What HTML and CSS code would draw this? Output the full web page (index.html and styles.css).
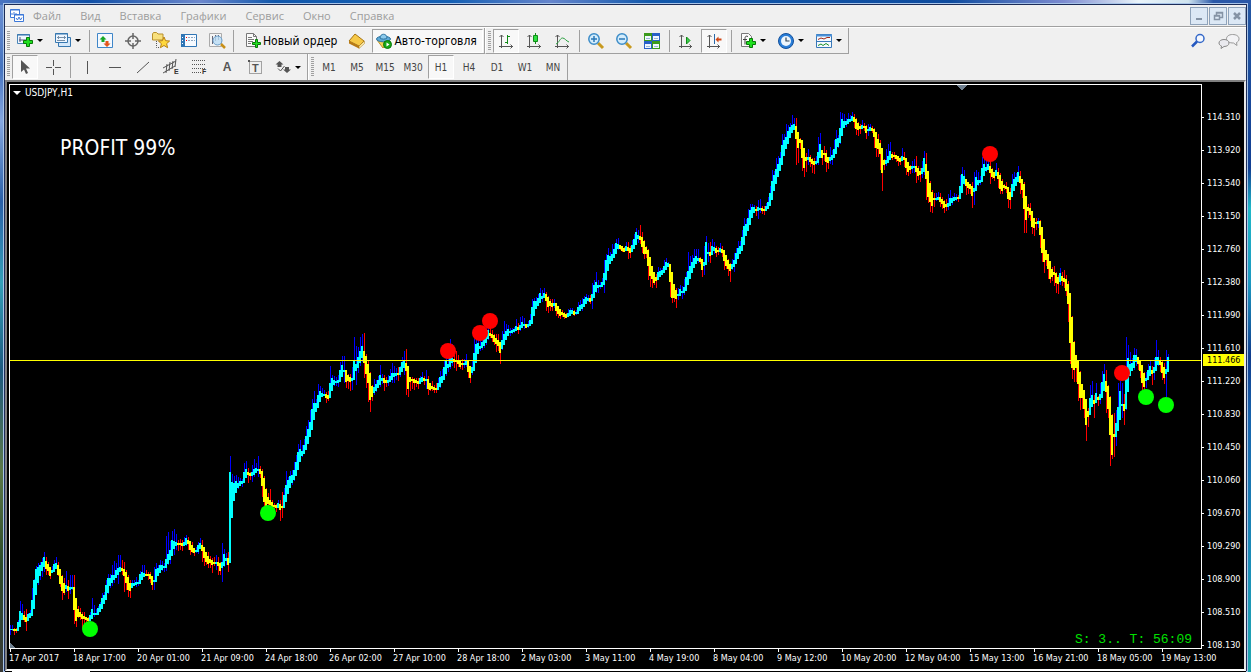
FILE: index.html
```html
<!DOCTYPE html>
<html lang="ru">
<head>
    <meta charset="UTF-8">
    <meta name="viewport" content="width=device-width, initial-scale=1.0">
    <title>USDJPY,H1</title>
    <link rel="stylesheet" href="styles.css">
</head>
<body>
<div class="window">
    <header class="menubar">
        <svg class="logo" viewBox="0 0 16 16"><path d="M1.500 1.500h9v8h-9z" fill="#fff" stroke="#3c78d8"/><path d="M1 2h10M3 5v2M5 4v3M7 5v3" stroke="#3c78d8"/><path d="M5.500 6.500h9v7h-9z" fill="#fff" stroke="#3c78d8"/><path d="M5 7h10" stroke="#3c78d8"/><path d="M7 10l1.500 2L10 9l1.500 3L13 9.500" fill="none" stroke="#3c78d8"/></svg>
        <nav class="menu">
            <a href="#">Файл</a>
            <a href="#">Вид</a>
            <a href="#">Вставка</a>
            <a href="#">Графики</a>
            <a href="#">Сервис</a>
            <a href="#">Окно</a>
            <a href="#">Справка</a>
        </nav>
        <div class="win-btns">
            <button type="button" aria-label="Свернуть"><svg viewBox="0 0 16 16"><path d="M5 11h6" stroke="#8593a5" stroke-width="2"/></svg></button>
            <button type="button" aria-label="Восстановить"><svg viewBox="0 0 16 16"><path d="M6.500 7V4.500h6v5H10M6 5h7M4.500 7.500h5v4h-5zM4 8h6" fill="none" stroke="#8593a5" stroke-width="1.500"/></svg></button>
            <button type="button" aria-label="Закрыть"><svg viewBox="0 0 16 16"><path d="M5 5l6 6M11 5l-6 6" stroke="#8593a5" stroke-width="2.500"/></svg></button>
        </div>
    </header>

    <div class="row main-row">
        <div class="toolbar standard">
            <span class="grip"></span>
            <button type="button" class="drop" aria-label="Новый график"><svg viewBox="0 0 16 16"><path d="M.5 1.500h12v9H.5z" fill="#eef6ff" stroke="#4a86b8"/><path d="M0 2h13" stroke="#2f6ea8"/><path d="M3 4v5M2 7h7" stroke="#557"/><path d="M9.500 4.500h3v3h3v3h-3v3h-3v-3h-3v-3h3z" fill="#1fe01f" stroke="#087808"/></svg></button>
            <button type="button" class="drop" aria-label="Профили"><svg viewBox="0 0 16 16"><path d="M3.500 4.500h12v9h-12z" fill="#d4e8fb" stroke="#3878b0"/><path d="M.5.500h12v9H.5z" fill="#eef6ff" stroke="#3878b0"/><path d="M0 1h13" stroke="#3878b0"/><path d="M2 4.500h9M2 7.500h8M3.500 3v3M9.500 3v3" stroke="#7890a8"/></svg></button>
            <span class="sep"></span>
            <button type="button" aria-label="Обзор рынка"><svg viewBox="0 0 16 16"><path d="M.5.500h15v14H.5z" fill="#f4f9ff" stroke="#3f86c8"/><path d="M6 3l3.500 3.500H7.500V9h-3V6.500H2.500z" fill="#16a826"/><path d="M10 14L6.500 10.500h2V8h3v2.500h2z" fill="#e4571c"/></svg></button>
            <button type="button" aria-label="Навигатор"><svg viewBox="0 0 16 16"><circle cx="8" cy="8" r="5" fill="none" stroke="#666" stroke-width="1.500"/><path d="M8 0v6M8 10v6M0 8h6M10 8h6" stroke="#666" stroke-width="1.500"/></svg></button>
            <button type="button" aria-label="Избранное"><svg viewBox="0 0 16 16"><path d="M-.5 7V1l1-1.500h3L5 1h5v6z" fill="#f8e07c" stroke="#b8902c"/><path d="M3.500 8v6.500h3" fill="none" stroke="#555" stroke-dasharray="1 1"/><path d="M11 4l1.600 3.700 4 .3-3 2.700 1 4L11 12.500l-3.600 2.200 1-4-3-2.700 4-.3z" fill="#ffd83c" stroke="#b88010"/></svg></button>
            <button type="button" aria-label="Терминал"><svg viewBox="0 0 16 16"><path d="M.5 1.500h15v12H.5z" fill="#f6faff" stroke="#2f75b5"/><path d="M0 1h4v13H0z" fill="#2f75b5"/><path d="M1 4.500h1M1 7.500h1M1 10.500h1" stroke="#fff"/><path d="M7 4.500h7M7 7.500h7" stroke="#8ca6c0" stroke-dasharray="2 1"/><path d="M5 4.500h1M5 7.500h1" stroke="#f00"/></svg></button>
            <button type="button" aria-label="Тестер"><svg viewBox="0 0 16 16"><path d="M.5.500h12v13H.5z" fill="#f4f4f4" stroke="#aaa"/><path d="M3.500 3v8M6.500 2v6M9.500 2v5" stroke="#667"/><circle cx="8.500" cy="7.500" r="4.500" fill="#b9dcf5" fill-opacity=".8" stroke="#6b9dc8"/><path d="M12 11l4 4" stroke="#c89018" stroke-width="2.500"/></svg></button>
            <span class="sep"></span>
            <button type="button" class="wide"><svg viewBox="0 0 16 16"><path d="M1.500.500h7l3 3v10h-10z" fill="#fafafa" stroke="#777"/><path d="M8.500.500v3h3M3 4.500h4M3 6.500h6M3 8.500h5M3 10.500h3" fill="none" stroke="#777"/><path d="M10.500 6.500h2v3h3v2h-3v3h-2v-3h-3v-2h3z" fill="#1fe01f" stroke="#087808"/></svg>Новый ордер</button>
            <button type="button" aria-label="Редактор"><svg viewBox="0 0 16 16"><path d="M6 1l9 7-5 5L0 8z" fill="#f6c948" stroke="#a87410"/><path d="M0 8v2.500l10 5V13z" fill="#b87a14"/><path d="M10 13v2.500l5.500-5V8z" fill="#fff0b0" stroke="#a87410" stroke-width=".5"/></svg></button>
            <button type="button" class="wide pressed auto"><svg viewBox="0 0 16 16"><path d="M1 7l6 8 7-8z" fill="#f2cf55" stroke="#b8922c"/><ellipse cx="7.500" cy="6" rx="7" ry="2.800" fill="#5eaad8" stroke="#2d739f"/><path d="M4 5c0-5 7-5 7 0-2 1.500-5 1.500-7 0z" fill="#8ccaec" stroke="#2d739f"/><circle cx="11.500" cy="11.500" r="4" fill="#18a818" stroke="#087808"/><path d="M10.500 9.500v4l3-2z" fill="#fff"/></svg>Авто-торговля</button>
        </div>
        <div class="toolbar">
            <span class="grip"></span>
            <button type="button" class="pressed" aria-label="Бары"><svg viewBox="0 0 16 16"><path d="M3.500 15V2M1.500 4l2-2 2 2M1 13.500h14M12.500 11.500l2 2-2 2" fill="none" stroke="#555"/><path d="M9.500 2v9M9 3.500h3M7 9.500h3" stroke="#128a18"/></svg></button>
            <button type="button" aria-label="Японские свечи"><svg viewBox="0 0 16 16"><path d="M3.500 15V2M1.500 4l2-2 2 2M1 13.500h14M12.500 11.500l2 2-2 2" fill="none" stroke="#555"/><path d="M9.500 0v11" stroke="#128a18"/><path d="M7.500 2.500h4v6h-4z" fill="#2ee040" stroke="#128a18"/></svg></button>
            <button type="button" aria-label="Линия"><svg viewBox="0 0 16 16"><path d="M3.500 15V2M1.500 4l2-2 2 2M1 13.500h14M12.500 11.500l2 2-2 2" fill="none" stroke="#555"/><path d="M2 11c3-1 4-6 6.500-6S12 8 15 9" fill="none" stroke="#2aa040"/></svg></button>
            <span class="sep"></span>
            <button type="button" aria-label="Увеличить"><svg viewBox="0 0 16 16"><path d="M10 10l5 5" stroke="#c89a20" stroke-width="3"/><circle cx="6" cy="6" r="5.200" fill="#d4ecfb" stroke="#3c8cc8" stroke-width="1.500"/><path d="M6 3v6M3 6h6" stroke="#2a78b8" stroke-width="1.500"/></svg></button>
            <button type="button" aria-label="Уменьшить"><svg viewBox="0 0 16 16"><path d="M10 10l5 5" stroke="#c89a20" stroke-width="3"/><circle cx="6" cy="6" r="5.200" fill="#d4ecfb" stroke="#3c8cc8" stroke-width="1.500"/><path d="M3 6h6" stroke="#2a78b8" stroke-width="1.500"/></svg></button>
            <button type="button" aria-label="Окна"><svg viewBox="0 0 16 16"><path d="M0 0h8v8H0zM8 8h8v8H8z" fill="#3c9a1c"/><path d="M8 0h8v8H8zM0 8h8v8H0z" fill="#2860c8"/><path d="M1 3h6v4H1zM9 3h6v4H9zM1 11h6v4H1zM9 11h6v4H9z" fill="#f0f6ff"/><path d="M2 5.500h4M10 5.500h4M2 13.500h4M10 13.500h4" stroke="#9bb8d8"/></svg></button>
            <span class="sep"></span>
            <button type="button" aria-label="Автопрокрутка"><svg viewBox="0 0 16 16"><path d="M3.500 15V2M1.500 4l2-2 2 2M1 13.500h13M11.500 11.500l2 2-2 2" fill="none" stroke="#555"/><path d="M8.500 4v7l3.500-3.500z" fill="#3ad04a" stroke="#128a18"/></svg></button>
            <button type="button" class="pressed" aria-label="Сдвиг графика"><svg viewBox="0 0 16 16"><path d="M3.500 15V2M1.500 4l2-2 2 2M1 13.500h13M11.500 11.500l2 2-2 2" fill="none" stroke="#555"/><path d="M8.500 1v10" stroke="#2868a8"/><path d="M9.500 6.500l3-3v2h3v2h-3v2z" fill="#d04818"/></svg></button>
            <span class="sep"></span>
            <button type="button" class="drop" aria-label="Индикаторы"><svg viewBox="0 0 16 16"><path d="M1.500.500h7l3 3v10h-10z" fill="#fafafa" stroke="#777"/><path d="M8 3.500c-2-1-3 0-3 2v6M3 6.500h4" fill="none" stroke="#444"/><path d="M9.500 5.500h3v3h3v3h-3v3h-3v-3h-3v-3h3z" fill="#1fe01f" stroke="#087808"/></svg></button>
            <button type="button" class="drop" aria-label="Периоды"><svg viewBox="0 0 16 16"><circle cx="8" cy="8" r="7.500" fill="#2a7ed8" stroke="#12509c"/><circle cx="8" cy="8" r="5" fill="#eef6fd"/><path d="M8 4.500V8h3.500" fill="none" stroke="#345" stroke-width="1.200"/></svg></button>
            <button type="button" class="drop" aria-label="Шаблоны"><svg viewBox="0 0 16 16"><path d="M.5 1.500h15v13H.5z" fill="#f4f9ff" stroke="#3878b8"/><path d="M0 2.500h16" stroke="#4a90d8" stroke-width="2"/><path d="M1 8.500h14" stroke="#3878b8"/><path d="M2 6.500l3-1.500 3 1 3-1.500h3" fill="none" stroke="#a02818"/><path d="M2 12.500l3-1.500 2 1.500 3-2 3 2" fill="none" stroke="#1a9028"/></svg></button>
        </div>
        <div class="tools-right">
            <button type="button" aria-label="Поиск"><svg viewBox="0 0 16 16"><circle cx="10" cy="5.500" r="4" fill="#f4f8ff" stroke="#3468c8" stroke-width="1.500"/><path d="M7 8.500l-5 5" stroke="#2458c0" stroke-width="2.500"/></svg></button>
            <button type="button" class="chat" aria-label="Чат"><svg viewBox="0 0 22 16"><path d="M14.500 1.500c4 0 6.500 1.800 6.500 4.300 0 2-1 3-2.500 3.700l.5 3-3.500-2.500c-4 0-7-1.300-7-4.200 0-2.500 2.500-4.300 6-4.300z" fill="#f3f3f5" stroke="#999"/><path d="M6 6.500c3 0 5 1.400 5 3.500s-2 3.500-5 3.500l-3 2 .5-2.500C2 12.400 1 11.500 1 10c0-2 2-3.500 5-3.500z" fill="#e9e9ee" stroke="#888"/></svg></button>
        </div>
    </div>

    <div class="row">
        <div class="toolbar">
            <span class="grip"></span>
            <button type="button" class="pressed" aria-label="Курсор"><svg viewBox="0 0 16 16"><path d="M4 1v12l3-2.500L9 15l2-1-2-4.500h4z" fill="#555"/></svg></button>
            <button type="button" aria-label="Перекрестие"><svg viewBox="0 0 16 16"><path d="M8.500 1v6M8.500 10v6M1 8.500h6M10 8.500h6" stroke="#555"/></svg></button>
            <span class="sep"></span>
            <button type="button" aria-label="Вертикальная линия"><svg viewBox="0 0 16 16"><path d="M8.500 2v13" stroke="#555"/></svg></button>
            <button type="button" aria-label="Горизонтальная линия"><svg viewBox="0 0 16 16"><path d="M2 8.500h12" stroke="#555"/></svg></button>
            <button type="button" aria-label="Трендовая линия"><svg viewBox="0 0 16 16"><path d="M2 14L14 3" stroke="#555"/></svg></button>
            <button type="button" aria-label="Канал"><svg viewBox="0 0 16 16"><path d="M0 9L13 2M0 14L12 7" stroke="#555"/><path d="M4 5l-1 9M7 3L6 12M10 2L9 10M13 0l-1 8" stroke="#555"/><text x="11" y="15" class="mark">E</text></svg></button>
            <button type="button" aria-label="Фибоначчи"><svg viewBox="0 0 16 16"><path d="M1 1.500h14M1 5.500h14M1 9.500h14M1 13.500h9" stroke="#555" stroke-dasharray="1 1"/><text x="11" y="15" class="mark">F</text></svg></button>
            <button type="button" class="letter">A</button>
            <button type="button" aria-label="Метка"><svg viewBox="0 0 16 16"><path d="M2.500 2.500h12v12h-12z" fill="none" stroke="#555" stroke-dasharray="1 1"/><path d="M1 1h2v2H1z" fill="#555"/><text x="5" y="13" class="tee">T</text></svg></button>
            <button type="button" class="drop" aria-label="Стрелки"><svg viewBox="0 0 16 16"><path d="M4.500 2l4 3.500h-2V8h-4V5.500h-2zM12 14l-4-3.500h2V8h4v2.500h2z" fill="#555"/><path d="M3 9.500l2.500 2.500 4-5" fill="none" stroke="#555"/></svg></button>
        </div>
        <div class="toolbar periods">
            <span class="grip"></span>
            <button type="button">M1</button>
            <button type="button">M5</button>
            <button type="button">M15</button>
            <button type="button">M30</button>
            <button type="button" class="pressed">H1</button>
            <button type="button">H4</button>
            <button type="button">D1</button>
            <button type="button">W1</button>
            <button type="button">MN</button>
        </div>
    </div>

    <main class="chart">
        <div class="plot">
            <svg id="candles" viewBox="10 85 1191 563" preserveAspectRatio="none"></svg>
            <div class="symbol">USDJPY,H1</div>
            <div class="profit">PROFIT 99%</div>
            <div class="timer">S: 3.. T: 56:09</div>
        </div>
        <div class="prices">
            <ul id="prices"></ul>
            <span class="current">111.466</span>
        </div>
        <ul class="times" id="times"></ul>
    </main>
</div>
<div class="tabs"><span></span></div>
<script src="chart.js"></script>
</body>
</html>
```
FILE: styles.css
```css
*{
    box-sizing: border-box;
}
body{
    margin: 0;
    min-height: 100vh;
    display: flex;
    flex-direction: column;
    padding: 4px 4px 0px 4px;
    font-family: "Open Sans", "Noto Sans", sans-serif;
    font-size: 11px;
    background:
        linear-gradient(to right, #4a74c0, #0f4fa6 7%, #6c87cc 16%, #1158ac 22%, #1560b4 36%, #6585cc 44%, #1259ac 52%, #0f4c9f 76%, #7c8bd0 85%, #eaf4fa 91%, #cfe3ee 95%, #2a58a8 97%) top / 100% 5px no-repeat,
        linear-gradient(#6f92d4, #4674c0 10%, #86a8e0 18%, #2a60a8 30%, #35a0b8 42%, #1d5a80 55%, #5c7848 70%, #2c4a28 84%, #3a3a38) left / 5px 100% no-repeat,
        linear-gradient(#2458a4, #123f92 25%, #20b8c8 31%, #1c98c0 42%, #103c8c 53%, #1763ac 62%, #1c90b8 85%, #22a8b0) right / 5px 100% no-repeat,
        #1a4f90;
}
ul{
    list-style: none;
    margin: 0;
    padding: 0;
}
button{
    font-family: inherit;
    background: none;
    border: none;
    padding: 0;
    margin: 0;
}
.window{
    flex: 1;
    display: flex;
    flex-direction: column;
    background: #f0f0f0;
    border: 1px solid #1c2c58;
    border-bottom: none;
    outline: 1px solid #a8c4e8;
}

/* menu */
.menubar{
    height: 22px;
    display: flex;
    align-items: center;
    border-bottom: 1px solid #a0a0a0;
    padding-left: 4px;
}
.logo{
    width: 16px;
    height: 16px;
}
.menu{
    display: flex;
    gap: 19px;
    margin-left: 8px;
}
.menu a{
    color: #9c9c9c;
    text-decoration: none;
    line-height: 16px;
}
.win-btns{
    display: flex;
    gap: 1px;
    margin-left: auto;
}
.win-btns button{
    width: 18px;
    height: 18px;
    background: #dce8f5;
    border: 1px solid #8fa3ba;
}
.win-btns svg{
    display: block;
    width: 16px;
    height: 16px;
}

/* toolbars */
.row{
    display: flex;
    height: 26px;
}
.main-row{
    height: 27px;
    border-top: 1px solid #fff;
}
.main-row .toolbar{
    border-bottom: 1px solid #a0a0a0;
}
.toolbar{
    display: flex;
    align-items: center;
    border-right: 1px solid #a0a0a0;
    padding-left: 2px;
}
.toolbar + .toolbar{
    border-left: 1px solid #fff;
}
.grip{
    width: 3px;
    height: 20px;
    margin-right: 1px;
    background: repeating-linear-gradient(#a0a0a0 0 1px, #f0f0f0 1px 2px);
}
.sep{
    width: 1px;
    height: 22px;
    background: #a0a0a0;
    margin: 0px 2px 0px 3px;
}
.standard .sep{
    margin: 0px 1px 0px 2px;
}
.toolbar button{
    width: 28px;
    height: 24px;
    display: flex;
    align-items: center;
    justify-content: center;
    color: #444;
}
.toolbar svg{
    width: 16px;
    height: 16px;
    flex: none;
    overflow: visible;
}
.toolbar button.drop{
    width: 38px;
    gap: 4px;
}
.drop::after{
    content: "";
    border: 3px solid transparent;
    border-top-color: #000;
    border-bottom: none;
}
.toolbar button.pressed{
    width: 26px;
    margin: 0px 1px;
    border: 1px solid #a0a0a0;
    border-right-color: #fff;
    border-bottom-color: #fff;
    background: #f8f8f8;
}
.toolbar button.wide{
    width: auto;
    gap: 2px;
    padding: 0px 6px 0px 10px;
    font-family: "DejaVu Sans Condensed", "DejaVu Sans", sans-serif;
    font-size: 12px;
    line-height: 16px;
    color: #000;
    white-space: nowrap;
}
.toolbar button.auto{
    padding: 0px 5px 0px 3px;
}
.toolbar button.letter{
    font-family: "Liberation Sans", sans-serif;
    font-size: 12px;
    font-weight: bold;
    color: #555;
}
.mark{
    font: bold 7px "Liberation Sans", sans-serif;
    fill: #333;
}
.tee{
    font: bold 11px "Liberation Sans", sans-serif;
    fill: #555;
}
.periods button{
    font-family: "DejaVu Sans Condensed", "DejaVu Sans", sans-serif;
    font-size: 10px;
}
.tools-right{
    display: flex;
    align-items: center;
    gap: 12px;
    margin-left: auto;
    padding-right: 6px;
}
.tools-right svg{
    display: block;
    width: 16px;
    height: 16px;
}
.tools-right .chat svg{
    width: 22px;
}

/* chart */
.chart{
    flex: 1;
    display: grid;
    grid-template-columns: 1fr 42px;
    grid-template-rows: 1fr 20px;
    background: #000;
    color: #fff;
    border-style: solid;
    border-color: #808080 #e8e8e8 #fff #808080;
    border-width: 2px;
    padding: 2px 0px 0px 2px;
    font-family: "DejaVu Sans Condensed", "DejaVu Sans", sans-serif;
    font-size: 9px;
    line-height: 12px;
}
.plot{
    position: relative;
    border: 1px solid #fff;
    min-height: 0;
}
.plot svg{
    position: absolute;
    width: 100%;
    height: 100%;
    shape-rendering: crispEdges;
}
.plot .dot{
    shape-rendering: auto;
}
.symbol{
    position: absolute;
    left: 3px;
    top: 2px;
    display: flex;
    align-items: center;
    gap: 4px;
    font-size: 10px;
}
.symbol::before{
    content: "";
    border: 4px solid transparent;
    border-top-color: #fff;
    border-bottom: none;
}
.profit{
    position: absolute;
    left: 50px;
    top: 51px;
    font-size: 21px;
    line-height: 24px;
}
.timer{
    position: absolute;
    right: 9px;
    bottom: 1px;
    font-family: "Liberation Mono", monospace;
    font-size: 13px;
    line-height: 14px;
    color: #00e000;
    white-space: pre;
}
.prices{
    position: relative;
    padding-top: 27px;
}
.prices ul{
    height: calc(100% + 2px);
    display: flex;
    flex-direction: column;
    justify-content: space-between;
}
.prices li{
    display: flex;
    align-items: center;
    gap: 3px;
}
.prices li::before{
    content: "";
    width: 2px;
    height: 1px;
    background: #fff;
}
.current{
    position: absolute;
    left: 1px;
    right: 0px;
    top: 270px;
    padding-left: 4px;
    background: #ffff00;
    color: #000;
}
.times{
    grid-column: 1 / 3;
    display: flex;
    overflow: hidden;
}
.times li{
    flex: 0 0 64px;
    white-space: nowrap;
}
.times li::before{
    content: "";
    display: block;
    width: 1px;
    height: 3px;
    margin-left: 1px;
    background: #fff;
}
.tabs{
    height: 1px;
    margin: 0px 1px;
    padding-left: 7px;
    background: #000;
}
.tabs span{
    display: block;
    width: 78px;
    height: 1px;
    background: #fff;
}
```
FILE: chart.js
```js
// one bar every 2px: close,high,low
var bars = `
629,625,635 629,625,631 630,628,635 630,628,633 622,620,630 611,601,624 613,604,620 619,611,622 621,609,631 614,613,620
613,610,617 600,588,614 580,579,608 569,566,592 567,563,585 565,562,580 562,558,577 557,552,572 568,557,575 570,562,575
575,567,579 570,566,572 564,560,572 563,557,569 574,562,576 583,572,587 590,575,600 592,578,595 585,571,592 590,580,599
587,575,594 587,575,590 609,575,624 620,598,627 616,606,618 616,608,620 618,612,628 618,612,628 619,617,628 620,617,628
615,612,620 609,598,619 613,605,617 613,609,614 608,606,613 604,602,610 598,593,609 595,592,602 585,580,599 578,574,594
578,574,588 575,565,586 575,561,583 570,563,578 568,555,584 567,555,572 570,560,575 575,562,592 582,570,590 589,575,597
590,580,598 583,580,588 583,580,586 582,577,587 582,580,586 574,571,582 572,565,580 573,565,575 575,570,576 575,572,580
578,572,583 584,576,590 580,567,590 569,563,580 568,565,574 565,560,571 565,561,571 566,563,572 559,536,571 554,532,565
550,541,564 540,531,555 541,529,555 542,534,550 544,540,551 544,539,550 545,540,551 542,537,546 538,535,546 543,537,550
549,542,555 551,542,553 552,548,556 550,547,553 545,542,554 543,538,549 550,540,562 557,547,566 561,553,565 563,552,568
562,556,568 564,558,573 563,557,566 562,555,570 565,557,575 570,562,575 562,543,582 554,549,567 558,553,565 564,552,572
472,456,562 482,474,517 483,476,500 481,475,491 483,477,489 481,478,486 481,479,487 472,463,483 469,461,478 474,468,483
475,472,480 472,465,482 469,459,477 468,463,473 469,456,477 473,466,478 485,469,497 501,476,506 505,488,510 503,493,515
504,489,512 508,500,513 506,503,512 507,504,512 503,500,508 509,500,521 507,492,518 495,488,508 485,471,502 480,477,493
476,471,487 475,470,485 470,462,481 462,455,474 452,444,468 449,440,460 451,445,457 445,439,453 436,426,450 429,420,442
422,410,437 409,399,430 403,391,420 403,399,412 395,384,408 391,386,402 393,388,397 394,390,396 397,392,403 398,391,401
383,366,397 378,375,390 380,376,386 381,377,386 380,375,387 370,362,381 365,356,376 370,356,383 381,370,388 380,374,389
381,374,391 378,367,390 361,337,379 364,346,385 357,347,373 351,337,366 346,334,362 362,333,378 373,354,388 382,361,402
399,372,412 396,385,401 387,379,395 384,380,392 380,376,388 375,365,387 378,374,384 382,375,391 382,377,387 380,375,386
376,369,382 373,363,383 373,366,383 373,368,380 374,367,381 367,366,377 362,357,372 360,351,375 370,349,395 388,367,397
381,378,391 380,377,389 382,378,390 382,378,387 383,378,389 378,376,383 377,372,381 380,376,385 379,370,389 388,376,395
389,383,391 388,381,391 389,385,393 389,383,393 383,378,390 377,371,388 376,369,382 367,360,379 360,352,376 364,352,372
358,339,369 358,344,366 361,355,368 361,351,371 363,355,367 366,360,369 364,359,370 363,359,368 360,354,367 371,360,378
377,366,383 367,361,375 353,339,371 344,337,362 343,339,354 346,335,351 342,334,350 338,330,348 333,328,345 330,325,340
335,325,338 337,330,342 341,334,345 343,334,352 345,334,351 352,342,364 340,331,350 334,321,344 331,324,339 329,325,336
331,328,336 330,328,334 329,327,333 326,319,331 329,323,334 325,317,331 322,316,327 324,318,329 327,324,328 324,321,328
320,314,326 307,299,323 301,298,315 301,297,309 298,294,306 293,288,302 296,290,302 293,288,298 300,292,311 306,296,313
305,299,311 306,299,311 303,299,308 310,303,316 313,307,318 315,310,319 314,310,317 316,312,319 317,313,318 313,309,317
310,308,315 310,308,313 314,310,316 312,310,315 307,302,313 305,300,311 304,298,311 299,296,307 297,294,303 298,295,302
301,295,304 294,283,309 285,280,297 282,272,293 285,280,293 285,282,289 282,278,287 273,260,293 260,254,281 255,248,270
256,252,263 254,244,260 249,244,256 243,239,254 244,238,250 248,245,250 250,246,252 251,247,252 246,242,250 250,242,259
252,246,258 245,240,250 239,234,248 232,228,244 235,230,243 239,225,244 246,232,253 253,240,259 253,246,258 265,249,280
275,257,287 278,266,288 282,272,285 280,274,288 272,267,279 271,268,276 270,268,274 266,260,272 262,258,268 263,262,267
281,264,297 297,272,303 297,285,302 298,288,308 294,288,300 289,285,295 291,286,299 287,279,295 277,272,290 271,252,284
266,256,277 262,255,271 258,249,268 256,249,264 258,249,263 261,257,264 269,259,277 262,246,275 242,236,262 252,243,262
255,242,263 246,239,254 247,242,254 252,246,257 251,247,255 248,243,253 252,246,257 260,250,270 265,255,269 268,259,276
270,263,282 264,259,270 260,253,272 253,248,263 248,241,259 246,241,254 237,230,251 226,218,244 224,219,236 218,209,230
210,204,225 207,204,218 207,205,213 210,206,216 207,200,219 208,199,213 210,206,214 210,206,215 206,203,210 202,197,208
193,186,206 181,170,200 175,171,191 169,158,182 164,156,174 158,152,169 145,134,165 140,134,156 137,124,149 131,125,142
127,123,138 125,115,132 124,118,130 138,118,165 147,132,163 142,138,149 157,142,171 167,150,177 160,153,172 157,149,165
161,155,167 163,158,173 164,158,174 161,156,165 152,137,165 144,133,157 157,150,165 154,146,161 161,150,172 162,157,169
157,147,164 155,150,165 149,140,158 139,130,153 138,135,148 128,112,144 119,113,135 121,114,128 121,118,127 119,113,122
119,115,122 116,112,121 121,114,128 128,118,135 129,122,136 128,124,134 125,120,129 127,123,131 132,125,139 129,124,136
127,124,131 130,126,133 136,128,148 147,132,157 148,134,157 153,140,170 172,149,191 164,159,170 160,149,166 156,144,163
151,142,160 157,152,160 156,152,159 158,155,162 160,156,166 161,157,165 156,148,161 159,152,167 167,158,175 171,163,176
169,165,174 166,161,173 166,159,173 171,156,183 175,166,180 174,168,182 168,161,178 158,151,175 178,153,200 196,175,203
201,181,212 205,190,213 199,193,207 198,193,201 197,192,200 201,193,207 203,197,209 207,200,213 206,199,211 203,194,210
198,190,204 198,196,205 197,193,200 197,194,201 198,195,202 186,175,199 174,167,193 176,170,185 185,179,195 187,184,194
188,185,194 195,182,208 188,172,205 177,170,191 180,172,186 180,176,185 168,157,181 164,158,176 167,160,172 164,155,170
172,160,184 176,168,179 177,172,181 170,163,175 178,168,188 188,173,194 190,179,194 187,184,190 188,182,193 198,187,208
199,188,209 184,174,196 179,172,190 177,173,185 172,166,182 182,171,194 189,179,198 208,182,233 219,196,233 210,204,218
214,203,221 226,211,234 227,218,236 223,218,230 221,218,228 234,220,248 252,228,262 261,239,273 259,250,266 268,254,279
278,261,283 276,267,281 274,266,286 282,272,293 283,275,294 273,268,285 280,272,286 281,270,288 290,275,296 303,281,322
342,300,364 367,316,379 369,341,382 367,355,382 383,361,401 397,371,410 397,384,409 408,390,418 424,399,441 416,408,427
398,385,414 395,381,406 403,395,418 393,383,403 399,396,406 394,383,404 382,371,397 374,364,389 391,370,413 408,385,418
434,396,466 454,414,459 436,413,457 423,410,446 407,383,430 391,381,419 404,383,418 410,394,425 373,337,410 358,345,392
364,352,376 363,358,371 355,348,370 355,349,366 363,357,370 370,360,378 382,365,390 386,372,390 378,372,388 370,364,380
366,360,375 373,366,385 367,358,380 357,340,371 357,350,366 364,357,372 372,360,380 377,363,384 369,350,397 357,354,371`;

var dots = [
    [90,629,"#00ff00"], [268,513,"#00ff00"], [448,351,"#ff0000"], [480,333,"#ff0000"], [490,321,"#ff0000"],
    [990,154,"#ff0000"], [1122,373,"#ff0000"], [1146,397,"#00ff00"], [1166,405,"#00ff00"]
];

function rect(x, y, w, h, color){
    return `<rect x="${x}" y="${y}" width="${w}" height="${h}" fill="${color}"/>`;
}

function drawChart(){
    let wicks = "", bodies = "";
    let open = 629;
    bars.trim().split(/\s+/).forEach((bar, i) => {
        let [close, high, low] = bar.split(",").map(Number);
        let x = 10 + i * 2;
        let up = close <= open;
        let top = Math.floor(Math.min(open, close));
        let size = Math.max(1, Math.ceil(Math.abs(open - close)) + 1);
        wicks += rect(x, high, 1, low - high, up ? "#0000ff" : "#ff0000");
        bodies += rect(x - 1, top, 2, size, up ? "#00ffff" : "#ffff00");
        // next bar opens in the middle of this one
        open = (open + close) / 2;
    });
    let html = wicks + bodies;
    html += rect(10, 360, 1191, 1, "#ffff00");
    dots.forEach(d => {
        html += `<circle class="dot" cx="${d[0]}" cy="${d[1]}" r="8" fill="${d[2]}"/>`;
    });
    html += `<path d="M956 85h11l-5 5z" fill="#708090"/><path d="M10 643v5h5z" fill="#708090"/>`;
    document.getElementById("candles").innerHTML = html;
}

var prices = ["114.310","113.920","113.540","113.150","112.760","112.380","111.990","111.610","111.220",
    "110.830","110.450","110.060","109.670","109.290","108.900","108.510","108.130"];
var times = ["17 Apr 2017","18 Apr 17:00","20 Apr 01:00","21 Apr 09:00","24 Apr 18:00","26 Apr 02:00",
    "27 Apr 10:00","28 Apr 18:00","2 May 03:00","3 May 11:00","4 May 19:00","8 May 04:00","9 May 12:00",
    "10 May 20:00","12 May 04:00","15 May 13:00","16 May 21:00","18 May 05:00","19 May 13:00"];

function fillList(id, items){
    document.getElementById(id).innerHTML = items.map(t => `<li>${t}</li>`).join("");
}

drawChart();
fillList("prices", prices);
fillList("times", times);
```
